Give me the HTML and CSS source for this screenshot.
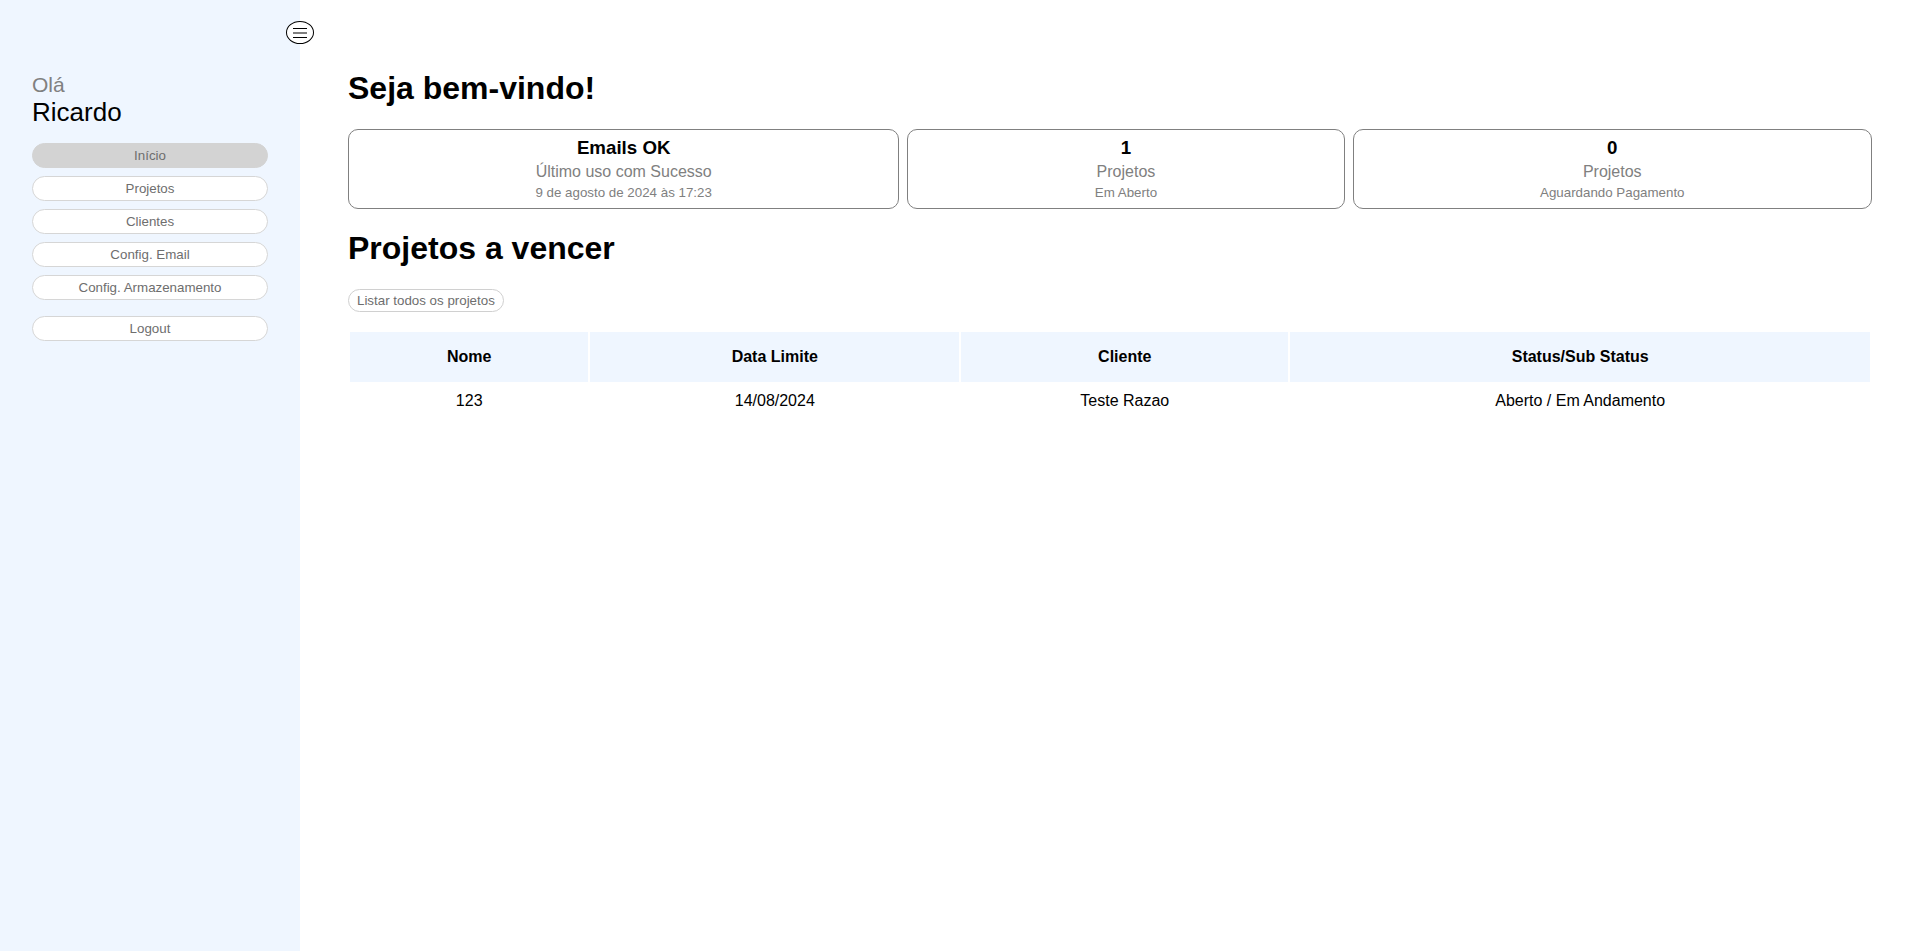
FILE: index.html
```html
<!DOCTYPE html>
<html lang="pt-BR">
<head>
<meta charset="utf-8">
<title>Início</title>
<link rel="stylesheet" href="styles.css">
</head>
<body>
<div class="app">
  <aside class="sidebar">
    <button class="menu-toggle" aria-label="Menu">
      <svg width="16" height="12" viewBox="0 0 16 12"><path d="M1 1.5H15M1 6H15M1 10.5H15" stroke="#000" stroke-width="1.2" fill="none"/></svg>
    </button>
    <div class="greeting">
      <div class="hello">Olá</div>
      <div class="name">Ricardo</div>
    </div>
    <nav class="nav">
      <button class="nav-btn active">Início</button>
      <button class="nav-btn">Projetos</button>
      <button class="nav-btn">Clientes</button>
      <button class="nav-btn">Config. Email</button>
      <button class="nav-btn">Config. Armazenamento</button>
      <button class="nav-btn logout">Logout</button>
    </nav>
  </aside>
  <main class="main">
    <h1 class="title">Seja bem-vindo!</h1>
    <div class="cards">
      <div class="card">
        <div class="card-title">Emails OK</div>
        <div class="card-sub">Último uso com Sucesso</div>
        <div class="card-small">9 de agosto de 2024 às 17:23</div>
      </div>
      <div class="card">
        <div class="card-title">1</div>
        <div class="card-sub">Projetos</div>
        <div class="card-small">Em Aberto</div>
      </div>
      <div class="card">
        <div class="card-title">0</div>
        <div class="card-sub">Projetos</div>
        <div class="card-small">Aguardando Pagamento</div>
      </div>
    </div>
    <h1 class="title">Projetos a vencer</h1>
    <div class="actions">
      <button class="pill">Listar todos os projetos</button>
    </div>
    <table class="table">
      <thead>
        <tr><th>Nome</th><th>Data Limite</th><th>Cliente</th><th>Status/Sub Status</th></tr>
      </thead>
      <tbody>
        <tr><td>123</td><td>14/08/2024</td><td>Teste Razao</td><td>Aberto / Em Andamento</td></tr>
      </tbody>
    </table>
  </main>
</div>
</body>
</html>
```

FILE: styles.css
```css
html, body {
  margin: 0;
  padding: 0;
}
body {
  font-family: "Liberation Sans", Arial, sans-serif;
  color: #000;
  background: #fff;
}
.app {
  display: flex;
  min-height: 100vh;
}
.sidebar {
  position: relative;
  width: 300px;
  flex: 0 0 300px;
  box-sizing: border-box;
  padding: 73px 32px 0 32px;
  background: #eff6ff;
  z-index: 2;
}
.menu-toggle {
  position: absolute;
  top: 21px;
  left: 286px;
  width: 28px;
  height: 23px;
  padding: 0;
  border: 1px solid #000;
  border-radius: 50%;
  background: #fff;
  display: flex;
  align-items: center;
  justify-content: center;
  cursor: pointer;
}
.menu-toggle svg {
  display: block;
}
.hello {
  font-size: 21px;
  color: #808080;
}
.name {
  font-size: 26px;
  color: #000;
}
.nav {
  margin-top: 15px;
  display: flex;
  flex-direction: column;
  gap: 8px;
}
.nav-btn {
  font-family: "Liberation Sans", Arial, sans-serif;
  font-size: 13.333px;
  color: #6e6e6e;
  height: 25px;
  padding: 0 8px;
  background: #fff;
  border: 1px solid #d6d6d6;
  border-radius: 13px;
  cursor: pointer;
}
.nav-btn.active {
  background: #d3d3d3;
  border-color: #d3d3d3;
}
.nav-btn.logout {
  margin-top: 8px;
}
.main {
  flex: 1;
  min-width: 0;
  padding: 49px 48px 48px;
}
.title {
  font-size: 32px;
  font-weight: bold;
  margin: 21.44px 0;
}
.cards {
  display: flex;
  gap: 8px;
}
.card {
  flex: 1 1 auto;
  border: 1px solid #808080;
  border-radius: 10px;
  padding: 5px 8px;
  text-align: center;
}
.card-title {
  font-size: 18.72px;
  font-weight: bold;
  line-height: 26px;
}
.card-sub {
  font-size: 16px;
  line-height: 22px;
  color: #808080;
}
.card-small {
  font-size: 13.333px;
  line-height: 20px;
  color: #808080;
}
.actions {
  margin-bottom: 18px;
}
.pill {
  font-family: "Liberation Sans", Arial, sans-serif;
  font-size: 13.333px;
  color: #6e6e6e;
  background: #fff;
  border: 1px solid #d0d0d0;
  border-radius: 12px;
  height: 23px;
  padding: 0 8px;
  cursor: pointer;
}
.table {
  width: 100%;
  border-spacing: 2px;
  font-size: 16px;
}
.table th {
  background: #eff6ff;
  font-weight: bold;
  padding: 16px;
  text-align: center;
}
.table td {
  padding: 8px;
  text-align: center;
}
```
